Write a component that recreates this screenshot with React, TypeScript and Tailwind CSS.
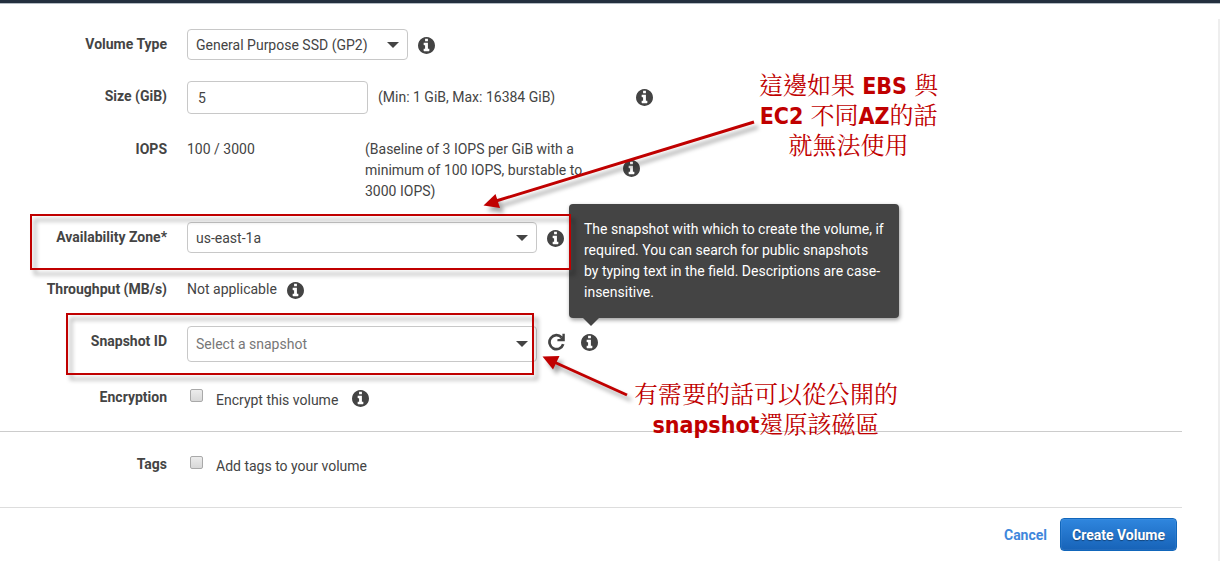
import type { ReactNode } from "react";

function InfoIcon({ label }: { label: string }) {
  return (
    <button type="button" aria-label={label} className="flex h-8 shrink-0 items-center">
      <svg viewBox="128 128 1536 1536" className="size-[17px] fill-[#444]" aria-hidden="true">
        <path d="M1152 1376v-160q0-14-9-23t-23-9h-96v-512q0-14-9-23t-23-9h-320q-14 0-23 9t-9 23v160q0 14 9 23t23 9h96v320h-96q-14 0-23 9t-9 23v160q0 14 9 23t23 9h448q14 0 23-9t9-23zm-128-896v-160q0-14-9-23t-23-9h-192q-14 0-23 9t-9 23v160q0 14 9 23t23 9h192q14 0 23-9t9-23zm640 416q0 209-103 385.5t-279.5 279.5-385.5 103-385.5-103-279.5-279.5-103-385.5 103-385.5 279.5-279.5 385.5-103 385.5 103 279.5 279.5 103 385.5z" />
      </svg>
    </button>
  );
}

function RefreshIcon() {
  return (
    <svg viewBox="0 0 18 18" className="size-[18px]" fill="none" stroke="#444" aria-hidden="true">
      <path d="M14.6 4.4A7 7 0 1 0 16.2 11.2" strokeWidth="2.7" />
      <path d="M17.8 0.800V8.200H10.400V6.200L13.200 5.800L15.400 3.200V0.800z" fill="#444" stroke="none" />
    </svg>
  );
}

function Caret() {
  return (
    <svg
      viewBox="0 0 12 6"
      className="pointer-events-none absolute top-1/2 right-[9px] h-[6px] w-[12px] -translate-y-1/2 fill-[#444]"
      aria-hidden="true"
    >
      <path d="M0 0H12L6 6z" />
    </svg>
  );
}

function Row({ label, htmlFor, children }: { label: string; htmlFor?: string; children: ReactNode }) {
  const labelClass = "w-[167px] shrink-0 text-right font-bold leading-[31px]";
  return (
    <div className="flex min-h-8 items-start gap-5">
      {htmlFor ? (
        <label htmlFor={htmlFor} className={labelClass}>{label}</label>
      ) : (
        <span className={labelClass}>{label}</span>
      )}
      <div className="flex items-start">{children}</div>
    </div>
  );
}

const field = "block w-full appearance-none rounded-[4px] border border-[#c8c8c8] bg-white outline-none";

const checkbox =
  "mt-[7px] ml-[3px] size-[13px] shrink-0 appearance-none rounded-[2px] border border-[#a9a9a9] bg-linear-to-b from-[#ececec] to-[#d8d8d8]";

const note =
  "absolute text-center text-[23px] leading-[30px] font-bold whitespace-nowrap text-[#c00000] font-['DejaVu_Sans_Condensed','DejaVu_Sans','Noto_Sans_CJK_TC',sans-serif]";

const han = "text-2xl leading-none font-normal font-['Noto_Serif_CJK_TC','Noto_Sans_CJK_TC',serif]";

const redBox =
  "pointer-events-none absolute border-2 border-[#c00000] drop-shadow-[4px_5px_2px_rgba(0,0,0,0.35)]";

function Tooltip() {
  return (
    <div
      role="tooltip"
      className="absolute top-[204px] left-[569px] w-[330px] rounded-[4px] bg-[#444] p-[15px] leading-[21px] text-white shadow-[1px_2px_4px_rgba(0,0,0,0.4)]"
    >
      The snapshot with which to create the volume, if required. You can search for public snapshots by
      typing text in the field. Descriptions are case-insensitive.
      <svg viewBox="0 0 16 8" className="absolute top-full left-[14px] h-[8px] w-[16px] fill-[#444]" aria-hidden="true">
        <path d="M0 0H16L8 8z" />
      </svg>
    </div>
  );
}

function Annotations() {
  return (
    <>
      <div className={`${redBox} top-[214px] left-[30px] h-[56px] w-[541px]`} />
      <div className={`${redBox} top-[313px] left-[66px] h-[62px] w-[468px]`} />
      <svg
        viewBox="0 0 290 300"
        className="pointer-events-none absolute top-[110px] left-[480px] h-[300px] w-[290px] drop-shadow-[4px_5px_2px_rgba(0,0,0,0.35)]"
        fill="#c00000"
        stroke="#c00000"
        aria-hidden="true"
      >
        <path d="M274 12L16 91" strokeWidth="3" />
        <path d="M3.500 95.500L15.500 84L20 98z" stroke="none" />
        <path d="M147 285L74 252" strokeWidth="3" />
        <path d="M62.500 246.500L79.500 246L73 259.500z" stroke="none" />
      </svg>
      <p className={`${note} top-[71px] left-[759px]`}>
        <span className={han}>這邊如果</span> EBS <span className={han}>與</span>
        <br />
        EC2 <span className={han}>不同</span>AZ<span className={han}>的話</span>
        <br />
        <span className={han}>就無法使用</span>
      </p>
      <p className={`${note} top-[380px] left-[634px]`}>
        <span className={han}>有需要的話可以從公開的</span>
        <br />
        snapshot<span className={han}>還原該磁區</span>
      </p>
    </>
  );
}

export default function App() {
  return (
    <div className="relative bg-white font-[Roboto,sans-serif] text-sm text-[#444]">
      <header className="h-1 border-b border-[#b4bcc4] bg-[#232f3e]" />
      <main className="mt-[15px] border-r-2 border-[#eee] pt-[10px] pr-9 pb-[10px]">
        <form onSubmit={(e) => e.preventDefault()}>
          <div className="flex flex-col gap-5">
            <Row label="Volume Type" htmlFor="type">
              <div className="relative mr-[10px] w-[221px]">
                <select id="type" className={`${field} h-[31px] pr-6 pl-2`}>
                  <option>General Purpose SSD (GP2)</option>
                </select>
                <Caret />
              </div>
              <InfoIcon label="About volume type" />
            </Row>
            <Row label="Size (GiB)" htmlFor="size">
              <div className="w-[181px]">
                <input id="size" defaultValue="5" className={`${field} h-[33px] px-[10px]`} />
              </div>
              <span className="ml-[10px] w-[258px] leading-[33px]">(Min: 1 GiB, Max: 16384 GiB)</span>
              <InfoIcon label="About size" />
            </Row>
            <Row label="IOPS">
              <span className="w-[178px] pt-[5px] leading-[21px]">100 / 3000</span>
              <span className="mr-[18px] w-[240px] pt-[5px] leading-[21px]">
                (Baseline of 3 IOPS per GiB with a minimum of 100 IOPS, burstable to 3000 IOPS)
              </span>
              <div className="self-center">
                <InfoIcon label="About IOPS" />
              </div>
            </Row>
            <Row label="Availability Zone*" htmlFor="zone">
              <div className="relative mr-[10px] w-[350px]">
                <select id="zone" className={`${field} h-[31px] pr-6 pl-2`}>
                  <option>us-east-1a</option>
                </select>
                <Caret />
              </div>
              <InfoIcon label="About availability zone" />
            </Row>
            <Row label="Throughput (MB/s)">
              <span className="mr-[10px] leading-[31px]">Not applicable</span>
              <InfoIcon label="About throughput" />
            </Row>
            <Row label="Snapshot ID" htmlFor="snapshot">
              <div className="relative mr-[10px] w-[350px]">
                <input
                  id="snapshot"
                  placeholder="Select a snapshot"
                  className={`${field} h-9 pr-6 pl-2 placeholder:text-[#777]`}
                />
                <Caret />
              </div>
              <button type="button" aria-label="Refresh snapshots" className="mr-4 flex h-8 items-center">
                <RefreshIcon />
              </button>
              <InfoIcon label="About snapshots" />
            </Row>
            <Row label="Encryption">
              <input id="encrypt" type="checkbox" className={checkbox} />
              <label htmlFor="encrypt" className="mr-[14px] ml-[13px] leading-9">Encrypt this volume</label>
              <InfoIcon label="About encryption" />
            </Row>
          </div>
          <hr className="mt-[13px] border-[#ccc]" />
          <div className="pt-[17px]">
            <Row label="Tags">
              <input id="tags" type="checkbox" className={checkbox} />
              <label htmlFor="tags" className="ml-[13px] leading-[34px]">Add tags to your volume</label>
            </Row>
          </div>
          <hr className="mt-6 border-[#ddd]" />
          <div className="flex items-center justify-end gap-[13px] pt-[10px] pr-[5px]">
            <a href="#" className="font-bold text-[#3f87dc]">Cancel</a>
            <button
              type="submit"
              className="h-[33px] rounded-[4px] border border-[#1166bb] bg-linear-to-b from-[#2f86de] to-[#1763b8] px-[11px] font-bold text-white shadow-[inset_0_0_1px_rgba(255,255,255,0.5)] text-shadow-[0_1px_1px_rgba(0,0,0,0.4)]"
            >
              Create Volume
            </button>
          </div>
        </form>
      </main>
      <Tooltip />
      <Annotations />
    </div>
  );
}
